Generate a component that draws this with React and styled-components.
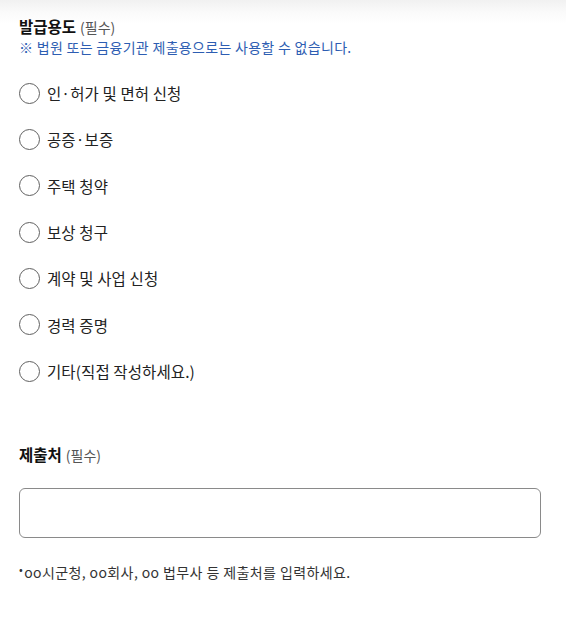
import React from "react";
import styled, { createGlobalStyle } from "styled-components";

const GlobalStyle = createGlobalStyle`
  html, body {
    margin: 0;
    padding: 0;
    background: #fff;
  }
  body {
    font-family: "Noto Sans CJK KR", "Noto Sans", sans-serif;
    color: #222;
  }
`;

// 상단 그림자 (헤더 아래 깔리는 부분)
const Page = styled.div`
  min-height: 628px;
  padding: 16px 20px 0 19px;
  box-sizing: border-box;
  background: linear-gradient(#f1f1f1 0px, #fafafa 12px, #fff 24px);
`;

const Section = styled.section`
  margin-top: ${(p) => p.top || 0}px;
`;

const Title = styled.h3`
  margin: 0;
  font-size: 15.5px;
  font-weight: 700;
  line-height: 20px;
  color: #111;
`;

const Required = styled.span`
  margin-left: 4px;
  font-size: 14px;
  font-weight: 400;
  color: #555;
`;

const Notice = styled.p`
  margin: 0;
  font-size: 14px;
  line-height: 20px;
  color: #2d5db2;
  letter-spacing: 0.3px;
`;

const RadioList = styled.div`
  margin-top: 13px;
  display: flex;
  flex-direction: column;
`;

const RadioRow = styled.label`
  display: flex;
  align-items: center;
  gap: 7px;
  height: 46.33px;
  cursor: pointer;
`;

const Circle = styled.span`
  width: 21px;
  height: 21px;
  box-sizing: border-box;
  border: 1.5px solid #606060;
  border-radius: 50%;
  background: #fff;
  flex-shrink: 0;
`;

const RadioText = styled.span`
  font-size: 15.5px;
  color: #222;
  letter-spacing: 0.1px;
`;

const Input = styled.input`
  display: block;
  width: 522px;
  height: 50px;
  margin-top: 23px;
  box-sizing: border-box;
  border: 1px solid #8a8a8a;
  border-radius: 6px;
  padding: 0 14px;
  font-size: 14px;
  font-family: inherit;
  outline: none;
`;

const Help = styled.p`
  margin: 24px 0 0;
  font-size: 14px;
  line-height: 20px;
  color: #333;
  letter-spacing: 0.4px;
`;

const Bullet = styled.span`
  display: inline-block;
  font-size: 11px;
  line-height: 1;
  vertical-align: 4px;
  margin-right: 1px;
`;

const purposes = [
  "인·허가 및 면허 신청",
  "공증·보증",
  "주택 청약",
  "보상 청구",
  "계약 및 사업 신청",
  "경력 증명",
  "기타(직접 작성하세요.)",
];

export default function App() {
  return (
    <>
      <GlobalStyle />
      <Page>
        <Section>
          <Title>
            발급용도<Required>(필수)</Required>
          </Title>
          <Notice>※ 법원 또는 금융기관 제출용으로는 사용할 수 없습니다.</Notice>
          <RadioList>
            {purposes.map((p) => (
              <RadioRow key={p}>
                <Circle />
                <RadioText>{p}</RadioText>
              </RadioRow>
            ))}
          </RadioList>
        </Section>

        <Section top={50}>
          <Title>
            제출처<Required>(필수)</Required>
          </Title>
          <Input type="text" />
          <Help>
            <Bullet>•</Bullet>oo시군청, oo회사, oo 법무사 등 제출처를 입력하세요.
          </Help>
        </Section>
      </Page>
    </>
  );
}
